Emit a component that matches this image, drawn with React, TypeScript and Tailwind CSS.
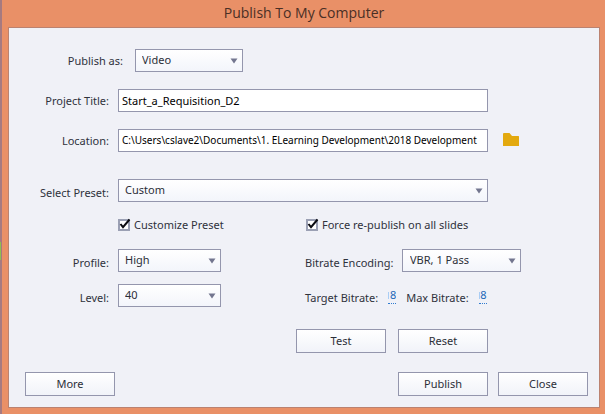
import { useState } from "react";
import type { ReactNode } from "react";

const FIELD = "h-[23px] border border-[#9496ad]";
const TEXT_FIELD = "min-w-0 flex-1 bg-white pr-px pl-[3px] pb-px text-black outline-none";

function Select({ id, value, className, wide }: { id: string; value: string; className: string; wide?: boolean }) {
  return (
    <div className={`relative ${className}`}>
      <select
        id={id}
        defaultValue={value}
        className={`${FIELD} block w-full appearance-none rounded-none bg-linear-to-b from-white to-[#f3f5fb] pb-px text-[11px] text-[#2c2f38] outline-none ${wide ? "pl-[7px]" : "pl-[6px]"}`}
      >
        <option>{value}</option>
      </select>
      <svg className="pointer-events-none absolute top-[9px] right-[5px] h-[6px] w-[8px]" viewBox="0 0 8 6" aria-hidden="true">
        <path d="M0.5 0.5H7.5L4 5.5Z" fill="#73768f" />
      </svg>
    </div>
  );
}

function Label({ htmlFor, children, className }: { htmlFor: string; children: ReactNode; className: string }) {
  return (
    <label htmlFor={htmlFor} className={`shrink-0 text-right whitespace-nowrap ${className}`}>
      {children}
    </label>
  );
}

function Check({ id, children }: { id: string; children: ReactNode }) {
  const [on, setOn] = useState(true);
  return (
    <label htmlFor={id} className="flex h-3 items-center gap-1 whitespace-nowrap">
      <span className="relative block size-3">
        <input
          id={id}
          type="checkbox"
          checked={on}
          onChange={() => setOn(!on)}
          className="block size-3 appearance-none border-2 border-[#9ba0b4] bg-white outline-none"
        />
        {on && (
          <svg className="pointer-events-none absolute inset-0 size-3 overflow-visible" viewBox="0 0 12 12" aria-hidden="true">
            <path d="M2.5 5L5 8.2L11.5 0.5" fill="none" stroke="#0b0b10" strokeWidth="2" />
          </svg>
        )}
      </span>
      {children}
    </label>
  );
}

function Rate({ id, label }: { id: string; label: string }) {
  return (
    <div className="flex items-center gap-[10px]">
      <label htmlFor={id} className="pt-1 whitespace-nowrap">
        {label}
      </label>
      <input
        id={id}
        defaultValue="8"
        className="h-4 w-2 border-b border-dotted border-[#2f7bd0] bg-[linear-gradient(#a9cdf5,#a9cdf5)] bg-[length:1px_7px] bg-[position:0_4px] bg-no-repeat text-right text-[11px] text-[#2268b8] outline-none"
      />
    </div>
  );
}

function Button({ children }: { children: ReactNode }) {
  return (
    <button
      type="button"
      className="h-6 w-[90px] border border-[#9496ad] bg-linear-to-b from-white to-[#f1f3f9] text-[11px] text-[#2c2f38]"
    >
      {children}
    </button>
  );
}

export default function App() {
  return (
    <div className="flex min-h-screen bg-[#e99067] font-['Noto_Sans','Open_Sans',sans-serif] text-[11px] leading-4 text-[#2f323c]">
      <div className="flex w-[2px] shrink-0 flex-col bg-[#a67a80] pt-[242px]">
        <div className="h-[18px] w-px bg-[#8fbf4d]" />
      </div>
      <main className="flex min-w-0 flex-1 flex-col pr-[5px] pb-[6px] pl-[6px]">
        <h1 className="h-[27px] pt-[3px] text-center font-['Open_Sans','Noto_Sans',sans-serif] text-sm leading-5 text-[#4a2f25]">
          Publish To My Computer
        </h1>
        <form className="flex-1 border border-[#bb8270] bg-[#f0f1f7] pt-[21px] pb-[11px]">
          <div className="flex items-center">
            <Label htmlFor="as" className="w-[126px] pt-px pr-3">Publish as:</Label>
            <Select id="as" value="Video" className="w-[108px]" />
          </div>
          <div className="mt-[17px] flex items-center">
            <Label htmlFor="title" className="w-[109px] pt-px pr-[9px]">Project Title:</Label>
            <input id="title" defaultValue="Start_a_Requisition_D2" className={`${FIELD} ${TEXT_FIELD} text-[11px]`} />
            <div className="w-[111px]" />
          </div>
          <div className="mt-[17px] flex items-center">
            <Label htmlFor="location" className="w-[109px] pt-px pr-[9px]">Location:</Label>
            <input
              id="location"
              defaultValue="C:\Users\cslave2\Documents\1. ELearning Development\2018 Development"
              className={`${FIELD} ${TEXT_FIELD} text-[10px]`}
            />
            <div className="w-[111px] pb-[2px] pl-[15px]">
              <button type="button" aria-label="Browse" className="block">
                <svg className="h-[13px] w-4" viewBox="0 0 16 13" aria-hidden="true">
                  <path d="M0 1Q0 0 1 0H6.5L9 3H15.5Q16 3 16 3.8V13H0Z" fill="#e3a90f" />
                </svg>
              </button>
            </div>
          </div>
          <div className="mt-[27px] flex items-center">
            <Label htmlFor="preset" className="w-[109px] pt-1 pr-[9px]">Select Preset:</Label>
            <Select id="preset" value="Custom" className="min-w-0 flex-1" />
            <div className="w-[111px]" />
          </div>
          <div className="mt-[17px] flex pl-[109px]">
            <div className="w-[188px]">
              <Check id="customize">Customize Preset</Check>
            </div>
            <Check id="force">Force re-publish on all slides</Check>
          </div>
          <div className="mt-[18px] flex items-center">
            <Label htmlFor="profile" className="w-[109px] pt-1 pr-[9px]">Profile:</Label>
            <Select id="profile" value="High" className="w-[103px]" />
            <Label htmlFor="encoding" className="ml-[84px] w-[97px] pt-1 pr-[9px]">Bitrate Encoding:</Label>
            <Select id="encoding" value="VBR, 1 Pass" className="w-[119px]" wide />
          </div>
          <div className="mt-3 flex items-center">
            <Label htmlFor="level" className="w-[109px] pt-1 pr-[9px]">Level:</Label>
            <Select id="level" value="40" className="w-[103px]" />
            <div className="ml-[84px] flex gap-[10px]">
              <Rate id="target" label="Target Bitrate:" />
              <Rate id="max" label="Max Bitrate:" />
            </div>
          </div>
          <div className="mt-[22px] flex justify-end gap-3 pr-[111px]">
            <Button>Test</Button>
            <Button>Reset</Button>
          </div>
          <div className="mt-[19px] flex gap-[10px] pr-[11px] pl-4">
            <Button>More</Button>
            <div className="flex-1" />
            <Button>Publish</Button>
            <Button>Close</Button>
          </div>
        </form>
      </main>
    </div>
  );
}
